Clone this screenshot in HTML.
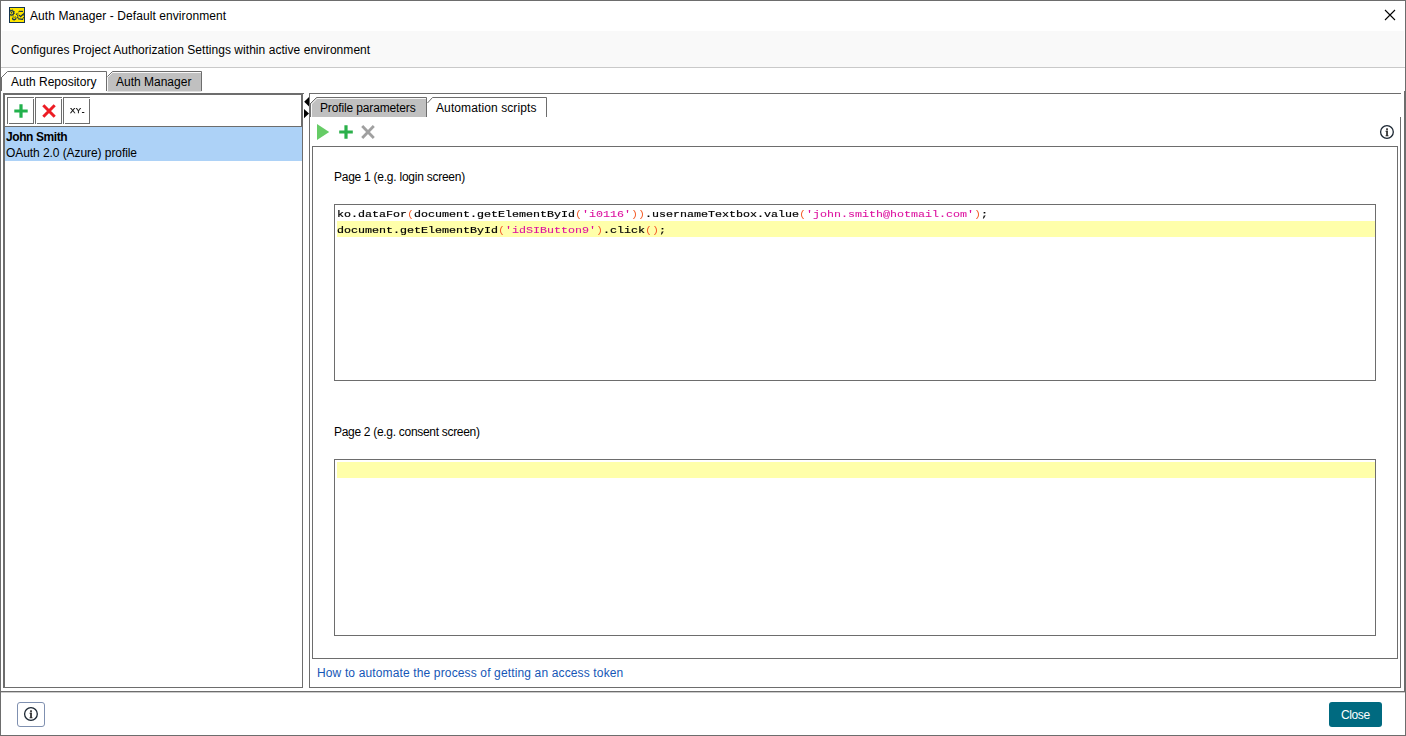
<!DOCTYPE html>
<html>
<head>
<meta charset="utf-8">
<title>Auth Manager - Default environment</title>
<style>
html,body{margin:0;padding:0;}
body{width:1406px;height:736px;position:relative;overflow:hidden;background:#fff;
 font-family:"Liberation Sans",Arial,sans-serif;font-size:12px;color:#000;}
.a{position:absolute;}
.t{position:absolute;white-space:pre;line-height:14px;height:14px;}
.ln{position:absolute;background:#6d6d6d;}
.dk{position:absolute;background:#6d6d6d;}
.mono{font-family:"Liberation Mono","Courier New",monospace;font-size:9.5px;line-height:16px;position:absolute;white-space:pre;transform:scaleX(1.2279);transform-origin:0 0;-webkit-text-stroke:0.18px;}
.o{color:#f4622f;-webkit-text-stroke:0;}
.s{color:#dc14a0;-webkit-text-stroke:0.1px;}
</style>
</head>
<body>
<!-- window frame -->
<div class="dk" style="left:0;top:0;width:1406px;height:1px;"></div>
<div class="dk" style="left:0;top:0;width:1px;height:736px;"></div>
<div class="dk" style="left:1405px;top:0;width:1px;height:736px;"></div>
<div class="dk" style="left:0;top:735px;width:1406px;height:1px;"></div>

<!-- title bar -->
<svg class="a" style="left:9px;top:7px;" width="16" height="16" viewBox="0 0 16 16">
 <rect x="0.5" y="0.5" width="15" height="15" fill="#ffe600" stroke="#143450" stroke-width="1"/>
 <g fill="none" stroke="#17364f" stroke-linecap="round">
  <circle cx="2.5" cy="5.8" r="2.25" stroke-width="1.15"/>
  <circle cx="2.5" cy="5.8" r="3.1" stroke-width="0.9" stroke-dasharray="1 1.43" stroke-linecap="butt"/>
  <path d="M3.5 11.1 a1.75 1.75 0 0 0 3.5 -0.2" stroke-width="1.3"/>
  <path d="M4.3 9.6 l0.9 1.3 M6.3 9.4 l-0.3 0.9" stroke-width="0.8" stroke="#4d5425"/>
  <path d="M7.3 7.4 l1.2 -1.1 M8.5 8.6 l0 0.1 M8.5 10.2 l1 1.6" stroke-width="1.1" stroke-dasharray="1 0.9"/>
  <path d="M10.3 4.4 H13.6" stroke-width="1.1" stroke-dasharray="1.2 0.8"/>
  <path d="M9.6 11.9 L13.6 12.3" stroke-width="1.3"/>
  <path d="M14.6 6.2 V8.2 M14.5 10.4 l-0.6 1.2" stroke-width="1" stroke="#3d4a2a"/>
  <path d="M10.4 8.4 L11.6 9.6 L13.8 7.5" stroke-width="1.3"/>
  <path d="M9.2 5.2 l1 -0.7 M9 6.6 v3.6" stroke-width="0.8" stroke="#6b6a20"/>
 </g>
 <circle cx="2.5" cy="5.8" r="0.8" fill="#143450"/>
</svg>
<div class="t" id="title" style="left:30px;top:9px;letter-spacing:0.08px;">Auth Manager - Default environment</div>
<svg class="a" style="left:1384px;top:9px;" width="12" height="12" viewBox="0 0 12 12">
 <path d="M1 1 L11 11 M11 1 L1 11" stroke="#000" stroke-width="1.1" fill="none"/>
</svg>

<!-- description header -->
<div class="a" style="left:2px;top:31px;width:1402px;height:36px;background:#f9f9f9;"></div>
<div class="a" style="left:1px;top:67px;width:1404px;height:1px;background:#c9c9c9;"></div>
<div class="t" id="hdr" style="left:11px;top:43px;letter-spacing:0.045px;">Configures Project Authorization Settings within active environment</div>

<!-- outer tabs -->
<svg class="a" style="left:0;top:70px;" width="210" height="23" viewBox="0 0 210 23">
 <!-- inactive tab fill -->
 <path d="M107.5 21.5 V6.5 L112.5 1.5 H201.5 V21.5 Z" fill="#c0c0c0" stroke="none"/>
 <path d="M107.5 21 V7.5 L112.5 2.5 H201" fill="none" stroke="#f8f8f8" stroke-width="1"/>
 <path d="M107.5 6.5 L112.5 1.5 H201.5 V21" fill="none" stroke="#6d6d6d" stroke-width="1"/>
 <!-- active tab -->
 <path d="M1.5 21 V7.5 L7.5 1.5 H106.5 V21" fill="#fff" stroke="#6d6d6d" stroke-width="1"/>
</svg>
<div class="dk" style="left:1px;top:77px;width:1px;height:14px;"></div>
<div class="t" id="tab1" style="left:11px;top:75px;">Auth Repository</div>
<div class="t" id="tab2" style="left:116px;top:75px;">Auth Manager</div>

<!-- outer panel right edge + bottom etched line -->
<div class="dk" style="left:1404px;top:91px;width:1px;height:601px;"></div>
<div class="ln" style="left:1px;top:691px;width:1404px;height:1px;"></div>
<div class="a" style="left:1px;top:692px;width:1404px;height:1px;background:#cbcbcb;"></div>

<!-- left panel -->
<div class="dk" style="left:3px;top:93px;width:300px;height:2px;"></div>
<div class="dk" style="left:3px;top:93px;width:2px;height:595px;"></div>
<div class="ln" style="left:302px;top:93px;width:1px;height:595px;"></div>
<div class="dk" style="left:301px;top:93px;width:2px;height:34px;"></div>
<div class="dk" style="left:303px;top:93px;width:1px;height:1px;"></div>
<div class="ln" style="left:3px;top:687px;width:300px;height:1px;"></div>
<div class="ln" style="left:5px;top:126px;width:297px;height:1px;"></div>

<!-- left toolbar buttons -->
<div class="a btn" style="left:7px;top:97px;width:25px;height:25px;border:1px solid #6d6d6d;"></div>
<div class="a btn" style="left:35px;top:97px;width:25px;height:25px;border:1px solid #6d6d6d;"></div>
<div class="a btn" style="left:63px;top:97px;width:25px;height:25px;border:1px solid #6d6d6d;"></div>
<!-- bevel gaps -->
<div class="a" style="left:33px;top:98px;width:1px;height:1px;background:#fff;"></div>
<div class="a" style="left:61px;top:98px;width:1px;height:1px;background:#fff;"></div>
<div class="a" style="left:89px;top:98px;width:1px;height:1px;background:#fff;"></div>
<div class="a" style="left:8px;top:123px;width:1px;height:1px;background:#fff;"></div>
<div class="a" style="left:36px;top:123px;width:1px;height:1px;background:#fff;"></div>
<div class="a" style="left:64px;top:123px;width:1px;height:1px;background:#fff;"></div>
<svg class="a" style="left:14px;top:104px;" width="14" height="14" viewBox="0 0 14 14">
 <path d="M7 0.3 V13.7 M0.3 7 H13.7" stroke="#22b14c" stroke-width="3.2" fill="none"/>
</svg>
<svg class="a" style="left:42px;top:104px;" width="14" height="14" viewBox="0 0 14 14">
 <path d="M1.3 1.3 L12.7 12.7 M12.7 1.3 L1.3 12.7" stroke="#ed1c24" stroke-width="3" fill="none"/>
</svg>
<div class="t" id="xy" style="left:70px;top:104px;font-size:8px;letter-spacing:0.5px;filter:grayscale(1);-webkit-text-stroke:0.25px #000;">XY<span style="position:relative;top:1px;font-weight:bold;">-</span></div>

<!-- list -->
<div class="a" style="left:5px;top:127px;width:297px;height:34px;background:#add2f7;"></div>
<div class="t" id="li1" style="left:6px;top:130px;font-weight:bold;letter-spacing:-0.42px;">John Smith</div>
<div class="t" id="li2" style="left:6px;top:146px;letter-spacing:-0.07px;">OAuth 2.0 (Azure) profile</div>

<!-- splitter arrows -->
<svg class="a" style="left:303px;top:96px;" width="7" height="23" viewBox="0 0 7 23">
 <path d="M6 1 V10.4 L1.2 5.7 Z" fill="#000"/>
 <path d="M1 13 V22.2 L6 17.6 Z" fill="#000"/>
</svg>

<!-- right panel -->
<div class="ln" style="left:309px;top:93px;width:1092px;height:1px;"></div>
<div class="ln" style="left:309px;top:93px;width:1px;height:595px;"></div>
<div class="ln" style="left:309px;top:687px;width:1092px;height:1px;"></div>
<div class="ln" style="left:1400px;top:117px;width:1px;height:571px;"></div>

<!-- inner tabs -->
<svg class="a" style="left:309px;top:96px;" width="240" height="21" viewBox="0 0 240 21">
 <path d="M1.5 21 V7.5 L7.5 1.5 H117.5 V21 Z" fill="#c0c0c0"/>
 <path d="M2.5 21 V8 L8 2.5 H117" fill="none" stroke="#f8f8f8" stroke-width="1"/>
 <path d="M1.5 21 V7.5 L7.5 1.5 H117.5 V21" fill="none" stroke="#6d6d6d" stroke-width="1"/>
 <path d="M118.5 7 L123.5 1.5 H237.5 V21" fill="none" stroke="#6d6d6d" stroke-width="1"/>
</svg>
<div class="dk" style="left:310px;top:103px;width:1px;height:14px;"></div>
<div class="t" id="tab3" style="left:320px;top:101px;letter-spacing:-0.14px;">Profile parameters</div>
<div class="t" id="tab4" style="left:436px;top:101px;letter-spacing:0.1px;">Automation scripts</div>

<!-- toolbar icons -->
<svg class="a" style="left:316px;top:123px;" width="60" height="18" viewBox="0 0 60 18">
 <path d="M1 1 V17 L13.2 9 Z" fill="#66cc66"/>
 <path d="M30 2.2 V15.8 M23.2 9 H36.8" stroke="#2bb04a" stroke-width="3.2" fill="none"/>
 <path d="M46.2 3 L57.8 15 M57.8 3 L46.2 15" stroke="#a0a0a0" stroke-width="2.8" fill="none"/>
</svg>
<svg class="a" style="left:1379px;top:124px;opacity:0.999;" width="16" height="16" viewBox="0 0 16 16">
 <circle cx="7.95" cy="7.95" r="6.35" fill="#fff" stroke="#1c2733" stroke-width="1.3"/>
 <text x="8" y="11.75" text-anchor="middle" font-family="Liberation Serif, serif" font-weight="bold" font-size="10.8" fill="#1c2733" stroke="#1c2733" stroke-width="0.4" style="filter:grayscale(1);text-rendering:geometricPrecision">i</text>
</svg>

<!-- inner content box -->
<div class="a" style="left:312px;top:146px;width:1084px;height:511px;border:1px solid #6d6d6d;"></div>
<div class="t" id="p1" style="left:334px;top:170px;letter-spacing:-0.25px;">Page 1 (e.g. login screen)</div>
<div class="a" style="left:334px;top:204px;width:1040px;height:175px;border:1px solid #6d6d6d;"></div>
<div class="a" style="left:337px;top:221px;width:1038px;height:16px;background:#ffffaa;"></div>
<div class="mono" id="c1" style="left:336.8px;top:207px;">ko.dataFor<span class="o">(</span>document.getElementById<span class="o">(</span><span class="s">'i0116'</span><span class="o">))</span>.usernameTextbox.value<span class="o">(</span><span class="s">'john.smith@hotmail.com'</span><span class="o">)</span>;</div>
<div class="mono" id="c2" style="left:336.8px;top:223px;">document.getElementById<span class="o">(</span><span class="s">'idSIButton9'</span><span class="o">)</span>.click<span class="o">()</span>;</div>

<div class="t" id="p2" style="left:334px;top:425px;letter-spacing:-0.3px;">Page 2 (e.g. consent screen)</div>
<div class="a" style="left:334px;top:459px;width:1040px;height:175px;border:1px solid #6d6d6d;"></div>
<div class="a" style="left:337px;top:462px;width:1038px;height:16px;background:#ffffaa;"></div>

<div class="t" id="lnk" style="left:317px;top:666px;color:#1556b6;letter-spacing:0.14px;">How to automate the process of getting an access token</div>

<!-- bottom bar -->
<div class="a" style="left:17px;top:702px;width:26px;height:23px;border:1px solid #7f90b0;border-radius:3px;background:#fff;"></div>
<svg class="a" style="left:23px;top:706px;opacity:0.999;" width="16" height="16" viewBox="0 0 16 16">
 <circle cx="7.95" cy="7.95" r="6.35" fill="#fff" stroke="#1c2733" stroke-width="1.3"/>
 <text x="8" y="11.75" text-anchor="middle" font-family="Liberation Serif, serif" font-weight="bold" font-size="10.8" fill="#1c2733" stroke="#1c2733" stroke-width="0.4" style="filter:grayscale(1);text-rendering:geometricPrecision">i</text>
</svg>
<div class="a" style="left:1329px;top:702px;width:53px;height:25px;border-radius:3px;background:#006a80;"></div>
<div class="t" id="cls" style="left:1341px;top:708px;color:#fff;letter-spacing:-0.4px;">Close</div>
</body>
</html>
